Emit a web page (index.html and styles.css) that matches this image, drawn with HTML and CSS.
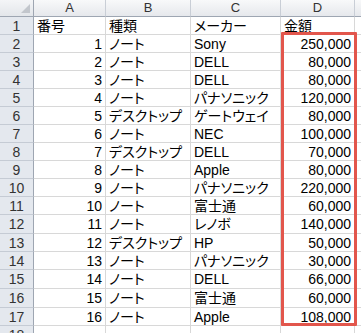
FILE: index.html
```html
<!DOCTYPE html>
<html lang="ja">
<head>
<meta charset="utf-8">
<link rel="stylesheet" href="styles.css">
</head>
<body>
<div class="wrap">
  <div class="sheet">
    <div class="corner"><span class="tri"></span></div>
    <div class="ch">A</div><div class="ch">B</div><div class="ch">C</div><div class="ch">D</div><div class="ch"></div>

    <div class="rh">1</div><div class="c">番号</div><div class="c">種類</div><div class="c">メーカー</div><div class="c">金額</div><div class="c"></div>
    <div class="rh">2</div><div class="c n">1</div><div class="c">ノート</div><div class="c">Sony</div><div class="c n">250,000</div><div class="c"></div>
    <div class="rh">3</div><div class="c n">2</div><div class="c">ノート</div><div class="c">DELL</div><div class="c n">80,000</div><div class="c"></div>
    <div class="rh">4</div><div class="c n">3</div><div class="c">ノート</div><div class="c">DELL</div><div class="c n">80,000</div><div class="c"></div>
    <div class="rh">5</div><div class="c n">4</div><div class="c">ノート</div><div class="c">パナソニック</div><div class="c n">120,000</div><div class="c"></div>
    <div class="rh">6</div><div class="c n">5</div><div class="c">デスクトップ</div><div class="c">ゲートウェイ</div><div class="c n">80,000</div><div class="c"></div>
    <div class="rh">7</div><div class="c n">6</div><div class="c">ノート</div><div class="c">NEC</div><div class="c n">100,000</div><div class="c"></div>
    <div class="rh">8</div><div class="c n">7</div><div class="c">デスクトップ</div><div class="c">DELL</div><div class="c n">70,000</div><div class="c"></div>
    <div class="rh">9</div><div class="c n">8</div><div class="c">ノート</div><div class="c">Apple</div><div class="c n">80,000</div><div class="c"></div>
    <div class="rh">10</div><div class="c n">9</div><div class="c">ノート</div><div class="c">パナソニック</div><div class="c n">220,000</div><div class="c"></div>
    <div class="rh">11</div><div class="c n">10</div><div class="c">ノート</div><div class="c">富士通</div><div class="c n">60,000</div><div class="c"></div>
    <div class="rh">12</div><div class="c n">11</div><div class="c">ノート</div><div class="c">レノボ</div><div class="c n">140,000</div><div class="c"></div>
    <div class="rh">13</div><div class="c n">12</div><div class="c">デスクトップ</div><div class="c">HP</div><div class="c n">50,000</div><div class="c"></div>
    <div class="rh">14</div><div class="c n">13</div><div class="c">ノート</div><div class="c">パナソニック</div><div class="c n">30,000</div><div class="c"></div>
    <div class="rh">15</div><div class="c n">14</div><div class="c">ノート</div><div class="c">DELL</div><div class="c n">66,000</div><div class="c"></div>
    <div class="rh">16</div><div class="c n">15</div><div class="c">ノート</div><div class="c">富士通</div><div class="c n">60,000</div><div class="c"></div>
    <div class="rh">17</div><div class="c n">16</div><div class="c">ノート</div><div class="c">Apple</div><div class="c n">108,000</div><div class="c"></div>
    <div class="rh">18</div><div class="c"></div><div class="c"></div><div class="c"></div><div class="c"></div><div class="c"></div>
  </div>
  <div class="highlight"></div>
</div>
</body>
</html>
```
FILE: styles.css
```css
html, body {
  margin: 0;
  padding: 0;
  background: #ffffff;
  overflow: hidden;
}
.wrap {
  position: relative;
  width: 361px;
  height: 333px;
  overflow: hidden;
}
.sheet {
  display: grid;
  grid-template-columns: 34px 72px 85px 90px 74px 40px;
  grid-template-rows: 17px repeat(10, 18px) 18px 19px 18px 18px 19px 19px 18px 18px;
  font-family: "Liberation Sans", "Noto Sans CJK JP", sans-serif;
  font-feature-settings: "palt";
  font-size: 14px;
  color: #000;
}
.corner {
  position: relative;
  background: linear-gradient(#f4f5f7, #e3e6ea);
  border-right: 1px solid #9ea6b2;
  border-bottom: 1px solid #9ea6b2;
}
.tri {
  position: absolute;
  right: 3px;
  bottom: 3px;
  width: 0;
  height: 0;
  border-left: 9px solid transparent;
  border-bottom: 9px solid #c2c6cc;
}
.ch {
  background: linear-gradient(#f8f9fa, #e6e8ec);
  border-right: 1px solid #c9ced6;
  border-bottom: 1px solid #9ea6b2;
  text-align: center;
  line-height: 16px;
  color: #333;
  font-size: 13px;
}
.rh {
  background: #e4e8ee;
  border-right: 1px solid #9ea6b2;
  border-bottom: 1px solid #c5cbd4;
  text-align: center;
  color: #333;
  line-height: 18px;
  font-size: 14px;
}
.c {
  border-right: 1px solid #d8d8d8;
  border-bottom: 1px solid #d8d8d8;
  padding: 0 3px;
  line-height: 18px;
  white-space: nowrap;
  overflow: hidden;
}
.n {
  text-align: right;
}
.highlight {
  position: absolute;
  left: 281px;
  top: 32px;
  width: 70px;
  height: 288px;
  border: 3px solid #e2564c;
  border-radius: 1px;
}
```
